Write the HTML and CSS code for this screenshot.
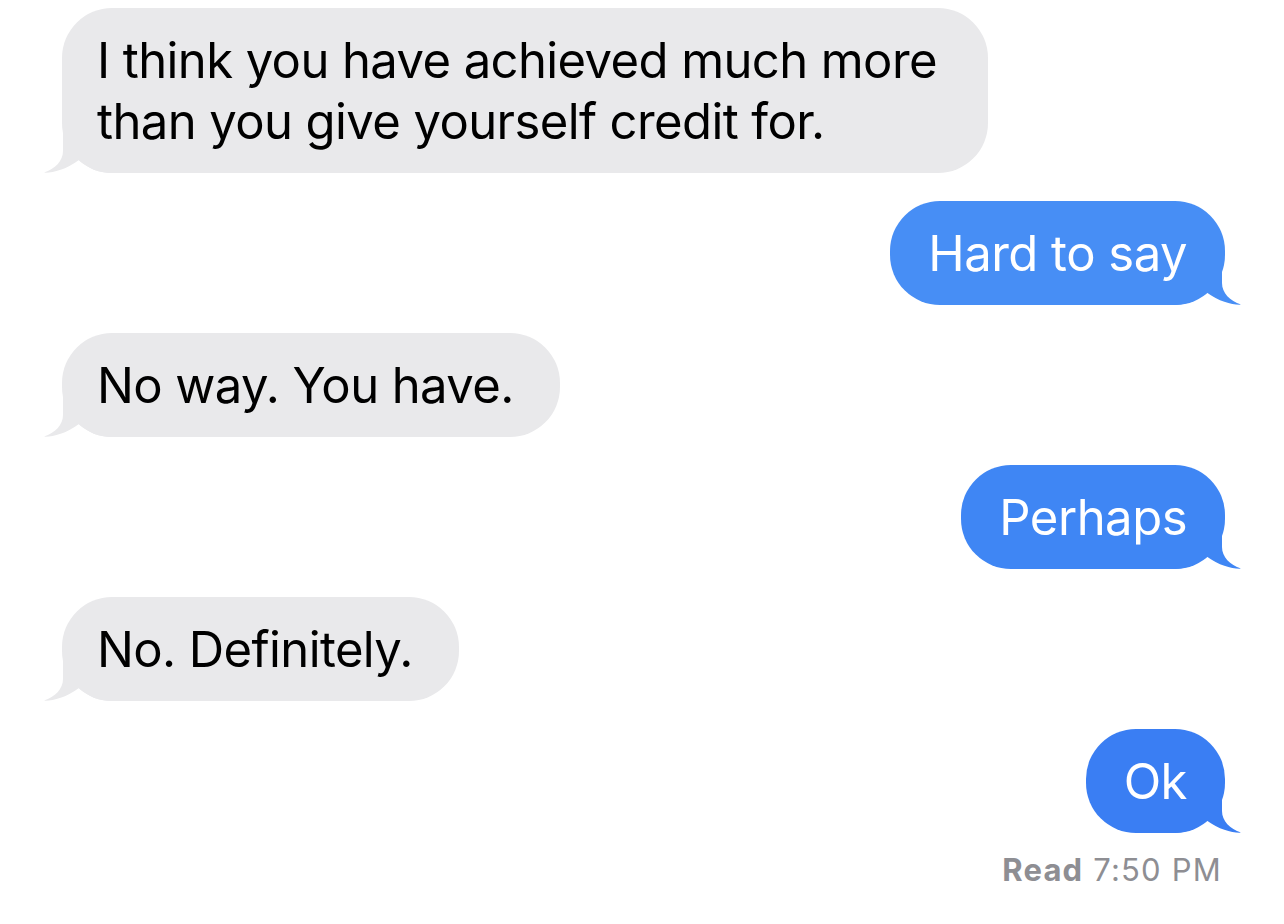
FILE: index.html
```html
<!DOCTYPE html>
<html lang="en">
<head>
<meta charset="utf-8">
<title>Messages</title>
<link rel="stylesheet" href="styles.css">
</head>
<body>
<main class="thread">
  <div class="bubble them">
    I think you have achieved much more than you give yourself credit for.
    <svg class="tail" viewBox="0 0 70 50" aria-hidden="true"><path d="M20,0 L20,28 C20,38 12,46 1,49.6 C10,50 22,47 36,37 C46,46 56,50 70,50 L70,0 Z"/></svg>
  </div>
  <div class="bubble me tone1">
    Hard to say
    <svg class="tail" viewBox="0 0 70 50" aria-hidden="true"><path d="M20,0 L20,28 C20,38 12,46 1,49.6 C10,50 22,47 36,37 C46,46 56,50 70,50 L70,0 Z"/></svg>
  </div>
  <div class="bubble them">
    No way. You have.
    <svg class="tail" viewBox="0 0 70 50" aria-hidden="true"><path d="M20,0 L20,28 C20,38 12,46 1,49.6 C10,50 22,47 36,37 C46,46 56,50 70,50 L70,0 Z"/></svg>
  </div>
  <div class="bubble me tone2">
    Perhaps
    <svg class="tail" viewBox="0 0 70 50" aria-hidden="true"><path d="M20,0 L20,28 C20,38 12,46 1,49.6 C10,50 22,47 36,37 C46,46 56,50 70,50 L70,0 Z"/></svg>
  </div>
  <div class="bubble them">
    No. Definitely.
    <svg class="tail" viewBox="0 0 70 50" aria-hidden="true"><path d="M20,0 L20,28 C20,38 12,46 1,49.6 C10,50 22,47 36,37 C46,46 56,50 70,50 L70,0 Z"/></svg>
  </div>
  <div class="last">
    <div class="bubble me tone3">
      Ok
      <svg class="tail" viewBox="0 0 70 50" aria-hidden="true"><path d="M20,0 L20,28 C20,38 12,46 1,49.6 C10,50 22,47 36,37 C46,46 56,50 70,50 L70,0 Z"/></svg>
    </div>
    <div class="receipt"><b>Read</b> 7:50 PM</div>
  </div>
</main>
</body>
</html>
```

FILE: styles.css
```css
html, body {
  margin: 0;
  padding: 0;
  background: #ffffff;
}

body {
  font-family: Inter, "Noto Sans", "Liberation Sans", sans-serif;
  -webkit-font-smoothing: antialiased;
}

.thread {
  display: flex;
  flex-direction: column;
  gap: 28px;
  padding: 8px 59px 0 62px;
}

.bubble {
  position: relative;
  isolation: isolate;
  box-sizing: border-box;
  width: fit-content;
  max-width: 926px;
  padding: 22px 46px 21px 35px;
  border-radius: 50px;
  font-size: 49px;
  line-height: 61px;
  letter-spacing: -0.6px;
}

.tail {
  position: absolute;
  z-index: -1;
  bottom: 0;
  width: 70px;
  height: 50px;
}

.them {
  align-self: flex-start;
  background: #e9e9eb;
  color: #000000;
}

.them .tail {
  left: -19px;
  fill: #e9e9eb;
}

.me {
  align-self: flex-end;
  color: #ffffff;
  padding: 22px 38px 21px 38px;
  letter-spacing: -0.5px;
}

.me .tail {
  right: -17px;
  transform: scaleX(-1);
}

.tone1 { background: #478ef5; }
.tone1 .tail { fill: #478ef5; }
.tone2 { background: #3f86f4; }
.tone2 .tail { fill: #3f86f4; }
.tone3 { background: #3a7ef3; }
.tone3 .tail { fill: #3a7ef3; }

.last {
  display: flex;
  flex-direction: column;
  align-items: flex-end;
  gap: 20px;
}

.receipt {
  margin-right: 3px;
  font-size: 31px;
  line-height: 34px;
  color: #8e8e93;
  letter-spacing: 1.2px;
}

.receipt b {
  font-weight: 700;
}
```
